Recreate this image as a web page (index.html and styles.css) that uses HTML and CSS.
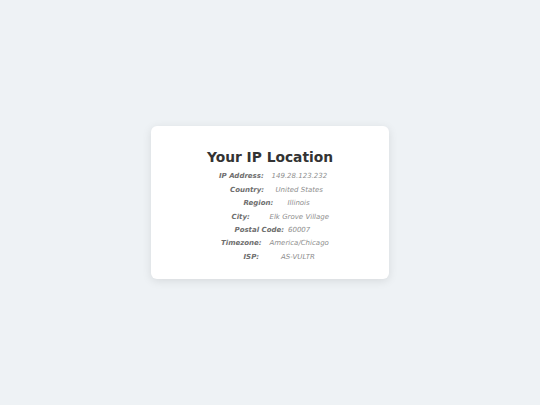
FILE: index.html
```html
<!DOCTYPE html>
<html lang="en">
<head>
  <meta charset="UTF-8" />
  <title>Your IP Location</title>
  <link rel="stylesheet" href="styles.css">
</head>
<body>
  <div class="card">
    <h1>Your IP Location</h1>
    <div class="info">
      <p class="row"><span class="label">IP Address:</span><span class="value">149.28.123.232</span></p>
      <p class="row"><span class="label">Country:</span><span class="value">United States</span></p>
      <p class="row"><span class="label">Region:</span><span class="value">Illinois</span></p>
      <p class="row"><span class="label">City:</span><span class="value">Elk Grove Village</span></p>
      <p class="row"><span class="label">Postal Code:</span><span class="value">60007</span></p>
      <p class="row"><span class="label">Timezone:</span><span class="value">America/Chicago</span></p>
      <p class="row"><span class="label">ISP:</span><span class="value">AS-VULTR</span></p>
    </div>
  </div>
</body>
</html>
```

FILE: styles.css
```css
body {
  font-family: "DejaVu Sans", Verdana, sans-serif;
  background-color: #eef2f5;
  margin: 0;
  height: 405px;
  display: flex;
  align-items: center;
  justify-content: center;
}
.card {
  background-color: #fff;
  width: 238px;
  padding: 23px 0 15px;
  border-radius: 6px;
  box-shadow: 0 2px 10px rgba(0,0,0,0.1);
}
.card h1 {
  margin: 0 0 5.5px;
  font-size: 13.8px;
  line-height: 16px;
  text-align: center;
  color: #333;
}
.info {
  display: flex;
  flex-direction: column;
}
/* each row: label starts at --indent, value starts --label-w after it */
.row {
  margin: 0;
  display: flex;
  padding-left: var(--indent);
  font-size: 7px;
  line-height: 13.45px;
  font-style: italic;
  white-space: nowrap;
}
.label {
  width: var(--label-w);
  flex-shrink: 0;
  font-weight: bold;
  color: #6e6e6e;
}
.value {
  color: #8e8e8e;
}
.row:nth-child(1) { --indent: 68px;   --label-w: 52.5px; }
.row:nth-child(2) { --indent: 79px;   --label-w: 45.5px; }
.row:nth-child(3) { --indent: 92.5px; --label-w: 44px; }
.row:nth-child(4) { --indent: 80.5px; --label-w: 38px; }
.row:nth-child(5) { --indent: 83.5px; --label-w: 53.5px; }
.row:nth-child(6) { --indent: 70px;   --label-w: 48.5px; }
.row:nth-child(7) { --indent: 92.5px; --label-w: 37.5px; }
```
